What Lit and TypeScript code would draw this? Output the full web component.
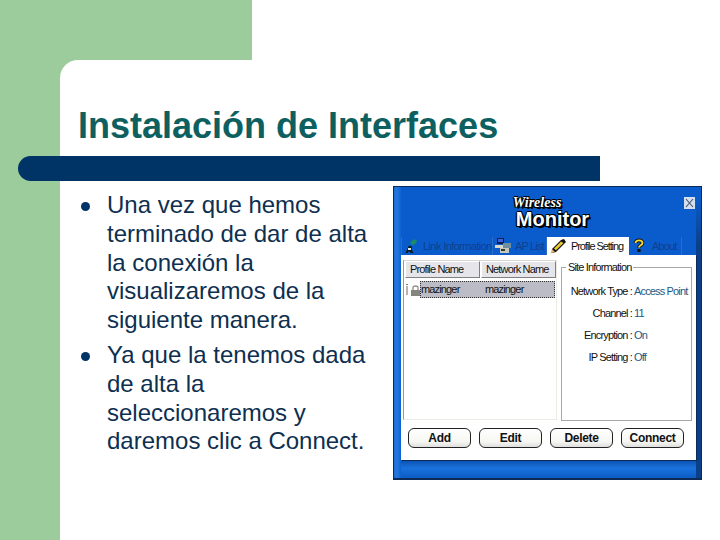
import { LitElement, html, css, svg } from "lit";
import { customElement } from "lit/decorators.js";

const wifi = svg`<svg width="14" height="16" viewBox="0 0 14 16"><path d="M5 5 L8 1.5 L12 2 L11 5 L8 7.5Z" fill="#1c8a6c"/><path d="M4 7.5 L7 8.5 L6.5 11 L8.5 15 H5.5 L4 13 L2.5 15 H0.5 L2.5 10.5Z" fill="#0c1c20"/><rect x="3" y="10" width="3" height="2" fill="#e8e8d8"/></svg>`;
const ap = svg`<svg width="18" height="16" viewBox="0 0 18 16"><rect x="2" y="0" width="7" height="6" fill="#10204e"/><rect x="3" y="1" width="5" height="3" fill="#3d63d8"/><rect x="0" y="7" width="8" height="3" fill="#d8d8cc"/><rect x="8" y="5" width="8" height="5" fill="#6f8f9f"/><rect x="5" y="10" width="9" height="5" fill="#c8c8b8"/><rect x="6" y="11" width="4" height="2" fill="#2a3a30"/></svg>`;
const pencil = svg`<svg width="17" height="16" viewBox="0 0 17 16"><path d="M2 11 L11 2 L14 1 L16 4 L14 6 L6 14 L2 15Z" fill="#111"/><path d="M4 10.5 L11 3.5 L13.5 5 L6 12.2Z" fill="#e8c92e"/><path d="M0.5 15.5 L2 11 L5 14Z" fill="#d8b070"/></svg>`;
const help = svg`<svg width="14" height="16" viewBox="0 0 14 16"><path d="M3.5 5 C3.5 1.5 10.5 1.5 10.5 5 C10.5 7.5 7 7 7 9.5" fill="none" stroke="#111" stroke-width="3.6"/><path d="M3.5 5 C3.5 1.5 10.5 1.5 10.5 5 C10.5 7.5 7 7 7 9.5" fill="none" stroke="#f4dc30" stroke-width="1.8"/><rect x="5.4" y="11" width="3.2" height="3" fill="#111"/></svg>`;
const lock = svg`<svg width="16" height="14" viewBox="0 0 16 14"><rect x="1" y="3" width="2" height="9" fill="#b5b5ad"/><rect x="1" y="1" width="2" height="1" fill="#777"/><rect x="6" y="7" width="9" height="6" fill="#85857f"/><path d="M8 7 V4.5 C8 2.5 13 2.5 13 4.5 V7" fill="none" stroke="#8e8e88" stroke-width="1.3"/></svg>`;
const close = svg`<svg width="11" height="12" viewBox="0 0 11 12"><rect width="11" height="12" fill="#d4e0ee"/><path d="M2 2 L9 10 M9 2 L2 10" stroke="#44566c" stroke-width="1.1"/></svg>`;

@customElement("app-root")
export class AppRoot extends LitElement {
  static styles = css`
    :host { display: block; width: 720px; height: 540px; overflow: hidden; background: #fff; font-family: "Liberation Sans", Arial, sans-serif; }
    .top { height: 60px; }
    .top-green { width: 252px; height: 60px; background: #9ccc9c; }
    .main { display: flex; height: 480px; background: #9ccc9c; padding-left: 60px; }
    .content { flex: 1; background: #fff; border-top-left-radius: 18px; padding-top: 46px; min-width: 0; }
    h1 { margin: 0 0 0 18px; font-size: 36px; line-height: 40px; font-weight: 700; color: #0e6060; white-space: nowrap; }
    .bar { margin: 10px 0 0 -42px; width: 582px; height: 25px; background: #003366; border-radius: 12.5px 0 0 12.5px; }
    .body { display: flex; margin-top: 5px; }
    ul { list-style: none; margin: 5px 0 0; padding: 0; width: 333px; flex: none; }
    li { display: flex; font-size: 24px; line-height: 28.8px; color: #0e2f50; }
    li + li { margin-top: 6px; }
    .dot { flex: none; width: 9px; height: 9px; margin: 11px 0 0 21px; border-radius: 50%; background: #003366; }
    .txt { margin-left: 17px; white-space: pre-line; }
    .win { box-sizing: border-box; width: 309px; height: 294px; flex: none; background: #0a5ccc; border: 1px solid #0b2a55; border-bottom-width: 2px; padding: 0 0 0 7px; display: flex; flex-direction: column; position: relative; letter-spacing: -0.85px; }
    .win::before { content: ""; position: absolute; left: 0; top: 0; bottom: 0; width: 7px; background: linear-gradient(90deg, #1a6ed4, #2478de 3px, #0d62d0); }
    .win::after { content: ""; position: absolute; right: 0; top: 10px; bottom: 0; width: 5px; background: linear-gradient(transparent, #0b3f88 50px); }
    .head { height: 50px; flex: none; display: flex; justify-content: center; position: relative; }
    .logo { display: flex; flex-direction: column; align-items: center; margin: 9px 0 0 3px; color: #fff; text-shadow: 1px 1px 0 #000, -1px 0 0 #000, 0 -1px 0 #000, 1px -1px 0 #000, -1px 1px 0 #000, 2px 2px 0 #000; line-height: 1; letter-spacing: 0; }
    .logo i { font: italic 700 14px/13px "Liberation Serif", serif; align-self: flex-start; margin: 0 0 2px -3px; }
    .logo b { font-size: 20px; line-height: 16px; }
    .x { position: absolute; right: 6px; top: 10px; width: 11px; height: 12px; display: block; }
    .x svg { display: block; }
    .tabs { display: flex; height: 18px; flex: none; font-size: 11px; color: #10408e; align-items: flex-end; }
    .tab { display: flex; align-items: center; height: 18px; gap: 5px; border-right: 1px solid #2c6cc8; white-space: nowrap; box-sizing: border-box; }
    .tab svg { flex: none; }
    .tab.first { border-left: 1px solid #2c6cc8; width: 92px; padding-left: 3px; gap: 4px; letter-spacing: -0.6px; }
    .tab.second { width: 54px; padding-left: 2px; gap: 2px; }
    .tab.on { background: #fff; color: #111; width: 82px; border: 0; gap: 4px; padding-left: 3px; letter-spacing: -1.1px; }
    .tab.last { width: 53px; padding-left: 3px; gap: 6px; }
    .panel { flex: none; width: 295px; height: 205px; background: #fff; box-shadow: 1px 1px 0 #0a2c5c; padding: 5px 4px 0 2px; box-sizing: border-box; display: flex; flex-direction: column; position: relative; z-index: 1; }
    .cols { display: flex; height: 161px; gap: 4px; flex: none; }
    .list { width: 154px; height: 160px; flex: none; border: 1px solid #ecece6; border-left-color: #9a9a94; border-top-color: #d8d8d2; box-sizing: border-box; font-size: 11px; color: #111; }
    .lh { display: flex; height: 17px; margin-left: 1px; }
    .lh span { box-sizing: border-box; width: 75px; height: 17px; background: #e6e6ea; border: 1px solid #fff; border-right-color: #808080; border-bottom-color: #808080; line-height: 15px; padding-left: 4px; white-space: nowrap; }
    .lh span + span { margin-left: 1px; }
    .row { display: flex; align-items: center; margin: 3px 1px 0 1px; height: 17px; }
    .row svg { flex: none; margin-right: -1px; }
    .sel { flex: 1; height: 17px; background: #bcbcc6; border: 1px dotted #333; display: flex; line-height: 15px; box-sizing: border-box; }
    .sel span:first-child { width: 64px; }
    fieldset { flex: 1; margin: 0; padding: 0; border: 1px solid #a8a8a8; height: 159px; box-sizing: border-box; align-self: flex-end; font-size: 11px; color: #111; min-width: 0; }
    legend { margin-left: 4px; padding: 0 2px; line-height: 11px; }
    .kv { display: grid; grid-template-columns: 70px 1fr; row-gap: 10px; margin-top: 12px; line-height: 12px; white-space: nowrap; }
    .kv div:nth-child(odd) { text-align: right; }
    .kv div:nth-child(even) { color: #1a5a88; padding-left: 2px; }
    .btns { display: flex; gap: 8px; margin: 7px 0 0 5px; }
    button { width: 63px; height: 20px; padding: 0; box-sizing: border-box; background: linear-gradient(#fff, #f6f6f2 70%, #dedede); border: 1px solid #222; border-radius: 6px; font: 700 12px/18px "Liberation Sans", Arial, sans-serif; letter-spacing: -0.3px; color: #111; }
    .foot { flex: 1; margin-left: -7px; background: linear-gradient(#0a4fb0, #1a72dc 45%, #0c5cc4); }
  `;

  render() {
    return html`
      <div class="top"><div class="top-green"></div></div>
      <div class="main">
        <div class="content">
          <h1>Instalación de Interfaces</h1>
          <div class="bar"></div>
          <div class="body">
            <ul>
              <li><span class="dot"></span><span class="txt">Una vez que hemos
terminado de dar de alta
la conexión la
visualizaremos de la
siguiente manera.</span></li>
              <li><span class="dot"></span><span class="txt">Ya que la tenemos dada
de alta la
seleccionaremos y
daremos clic a Connect.</span></li>
            </ul>
            <div class="win">
              <div class="head">
                <div class="logo"><i>Wireless</i><b>Monitor</b></div>
                <span class="x">${close}</span>
              </div>
              <div class="tabs">
                <div class="tab first">${wifi}<span>Link Information</span></div>
                <div class="tab second">${ap}<span>AP List</span></div>
                <div class="tab on">${pencil}<span>Profile Setting</span></div>
                <div class="tab last">${help}<span>About</span></div>
              </div>
              <div class="panel">
                <div class="cols">
                  <div class="list">
                    <div class="lh"><span>Profile Name</span><span>Network Name</span></div>
                    <div class="row">${lock}<div class="sel"><span>mazinger</span><span>mazinger</span></div></div>
                  </div>
                  <fieldset>
                    <legend>Site Information</legend>
                    <div class="kv">
                      <div>Network Type :</div><div>Access Point</div>
                      <div>Channel :</div><div>11</div>
                      <div>Encryption :</div><div>On</div>
                      <div>IP Setting :</div><div>Off</div>
                    </div>
                  </fieldset>
                </div>
                <div class="btns"><button>Add</button><button>Edit</button><button>Delete</button><button>Connect</button></div>
              </div>
              <div class="foot"></div>
            </div>
          </div>
        </div>
      </div>
    `;
  }
}
